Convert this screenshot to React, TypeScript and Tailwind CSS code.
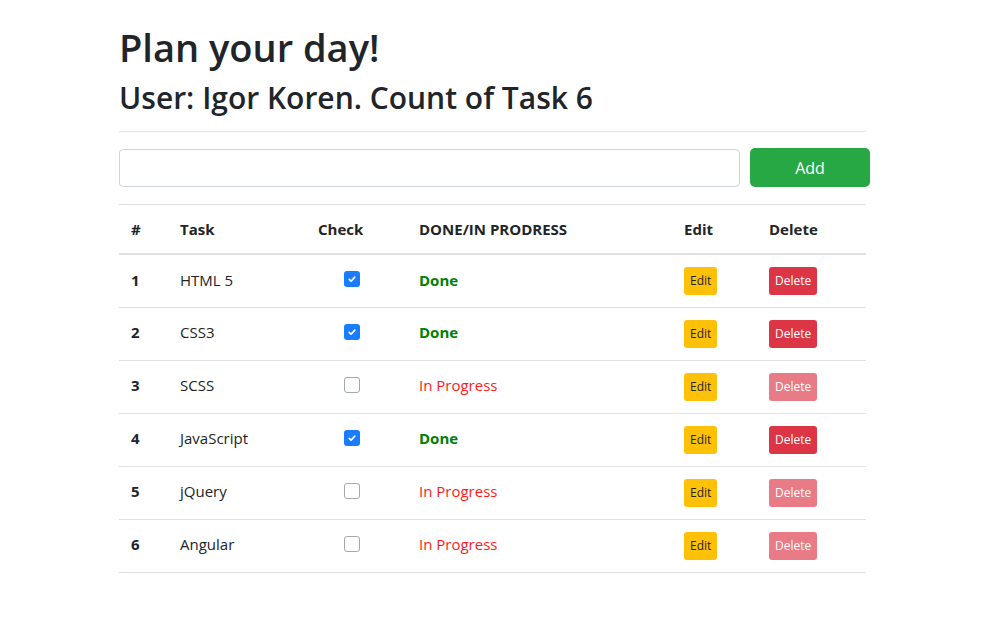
import { useState } from "react";

interface Task {
  id: number;
  title: string;
  done: boolean;
}

const initialTasks: Task[] = [
  { id: 1, title: "HTML 5", done: true },
  { id: 2, title: "CSS3", done: true },
  { id: 3, title: "SCSS", done: false },
  { id: 4, title: "JavaScript", done: true },
  { id: 5, title: "jQuery", done: false },
  { id: 6, title: "Angular", done: false },
];

const CheckBox = ({ checked, onChange }: { checked: boolean; onChange: () => void }) => (
  <button
    type="button"
    onClick={onChange}
    className={`flex items-center justify-center w-4 h-4 rounded-[3px] ${
      checked ? "bg-[#1a7dff]" : "bg-white border border-[#a3a9b1]"
    }`}
  >
    {checked && (
      <svg viewBox="0 0 16 16" className="w-[10px] h-[10px]" fill="none" stroke="white" strokeWidth="2.6" strokeLinecap="round" strokeLinejoin="round">
        <path d="M3.5 8.5l3 3 6-6.5" />
      </svg>
    )}
  </button>
);

const App = () => {
  const [tasks, setTasks] = useState<Task[]>(initialTasks);
  const [text, setText] = useState("");

  const toggle = (id: number) =>
    setTasks(tasks.map((t) => (t.id === id ? { ...t, done: !t.done } : t)));

  return (
    <div className="min-h-screen bg-white text-[#212529] font-['Open_Sans',sans-serif]">
      <div className="w-[747px] ml-[119px] pt-[23px]">
        <h1 className="text-[38px] leading-[48px] font-semibold">Plan your day!</h1>
        <h2 className="text-[30px] leading-[38px] font-semibold mt-2">
          User: Igor Koren. Count of Task {tasks.length}
        </h2>
        <hr className="mt-[14px] border-t border-black/10" />

        <div className="flex items-center gap-[10px] mt-[16px]">
          <input
            value={text}
            onChange={(e) => setText(e.target.value)}
            className="w-[621px] h-[38px] shrink-0 border border-[#ced4da] rounded-[4px] px-3 outline-none"
          />
          <button className="w-[120px] h-[39px] shrink-0 bg-[#28a745] text-white rounded-[5px] text-[16px] font-['Open_Sans',sans-serif]">
            Add
          </button>
        </div>

        <table className="w-full mt-[17px] border-collapse text-[15px]">
          <thead>
            <tr className="border-t border-[#dee2e6] border-b-2 text-left">
              <th className="w-[49px] px-3 py-3 leading-6 font-bold">#</th>
              <th className="w-[138px] px-3 py-3 leading-6 font-bold">Task</th>
              <th className="w-[101px] px-3 py-3 leading-6 font-bold">Check</th>
              <th className="w-[265px] px-3 py-3 leading-6 font-bold">DONE/IN PRODRESS</th>
              <th className="w-[85px] px-3 py-3 leading-6 font-bold">Edit</th>
              <th className="px-3 py-3 leading-6 font-bold">Delete</th>
            </tr>
          </thead>
          <tbody>
            {tasks.map((t) => (
              <tr key={t.id} className="border-b border-[#dee2e6] h-[53px]">
                <td className="px-3 pb-[2px] font-bold">{t.id}</td>
                <td className="px-3 pb-[2px]">{t.title}</td>
                <td className="pl-[38px] pb-[3px]">
                  <CheckBox checked={t.done} onChange={() => toggle(t.id)} />
                </td>
                <td className="px-3 pb-[2px]">
                  {t.done ? (
                    <span className="text-[#008000] font-bold">Done</span>
                  ) : (
                    <span className="text-[#ff1a1a]">In Progress</span>
                  )}
                </td>
                <td className="px-3">
                  <button className="h-[28px] px-[6px] bg-[#ffc107] rounded-[3px] text-[12px] text-[#212529]">
                    Edit
                  </button>
                </td>
                <td className="px-3">
                  <button
                    disabled={!t.done}
                    onClick={() => setTasks(tasks.filter((x) => x.id !== t.id))}
                    className={`h-[28px] px-[6px] rounded-[3px] text-[12px] text-white bg-[#dc3545] ${
                      t.done ? "" : "opacity-65"
                    }`}
                  >
                    Delete
                  </button>
                </td>
              </tr>
            ))}
          </tbody>
        </table>
      </div>
    </div>
  );
};

export default App;
